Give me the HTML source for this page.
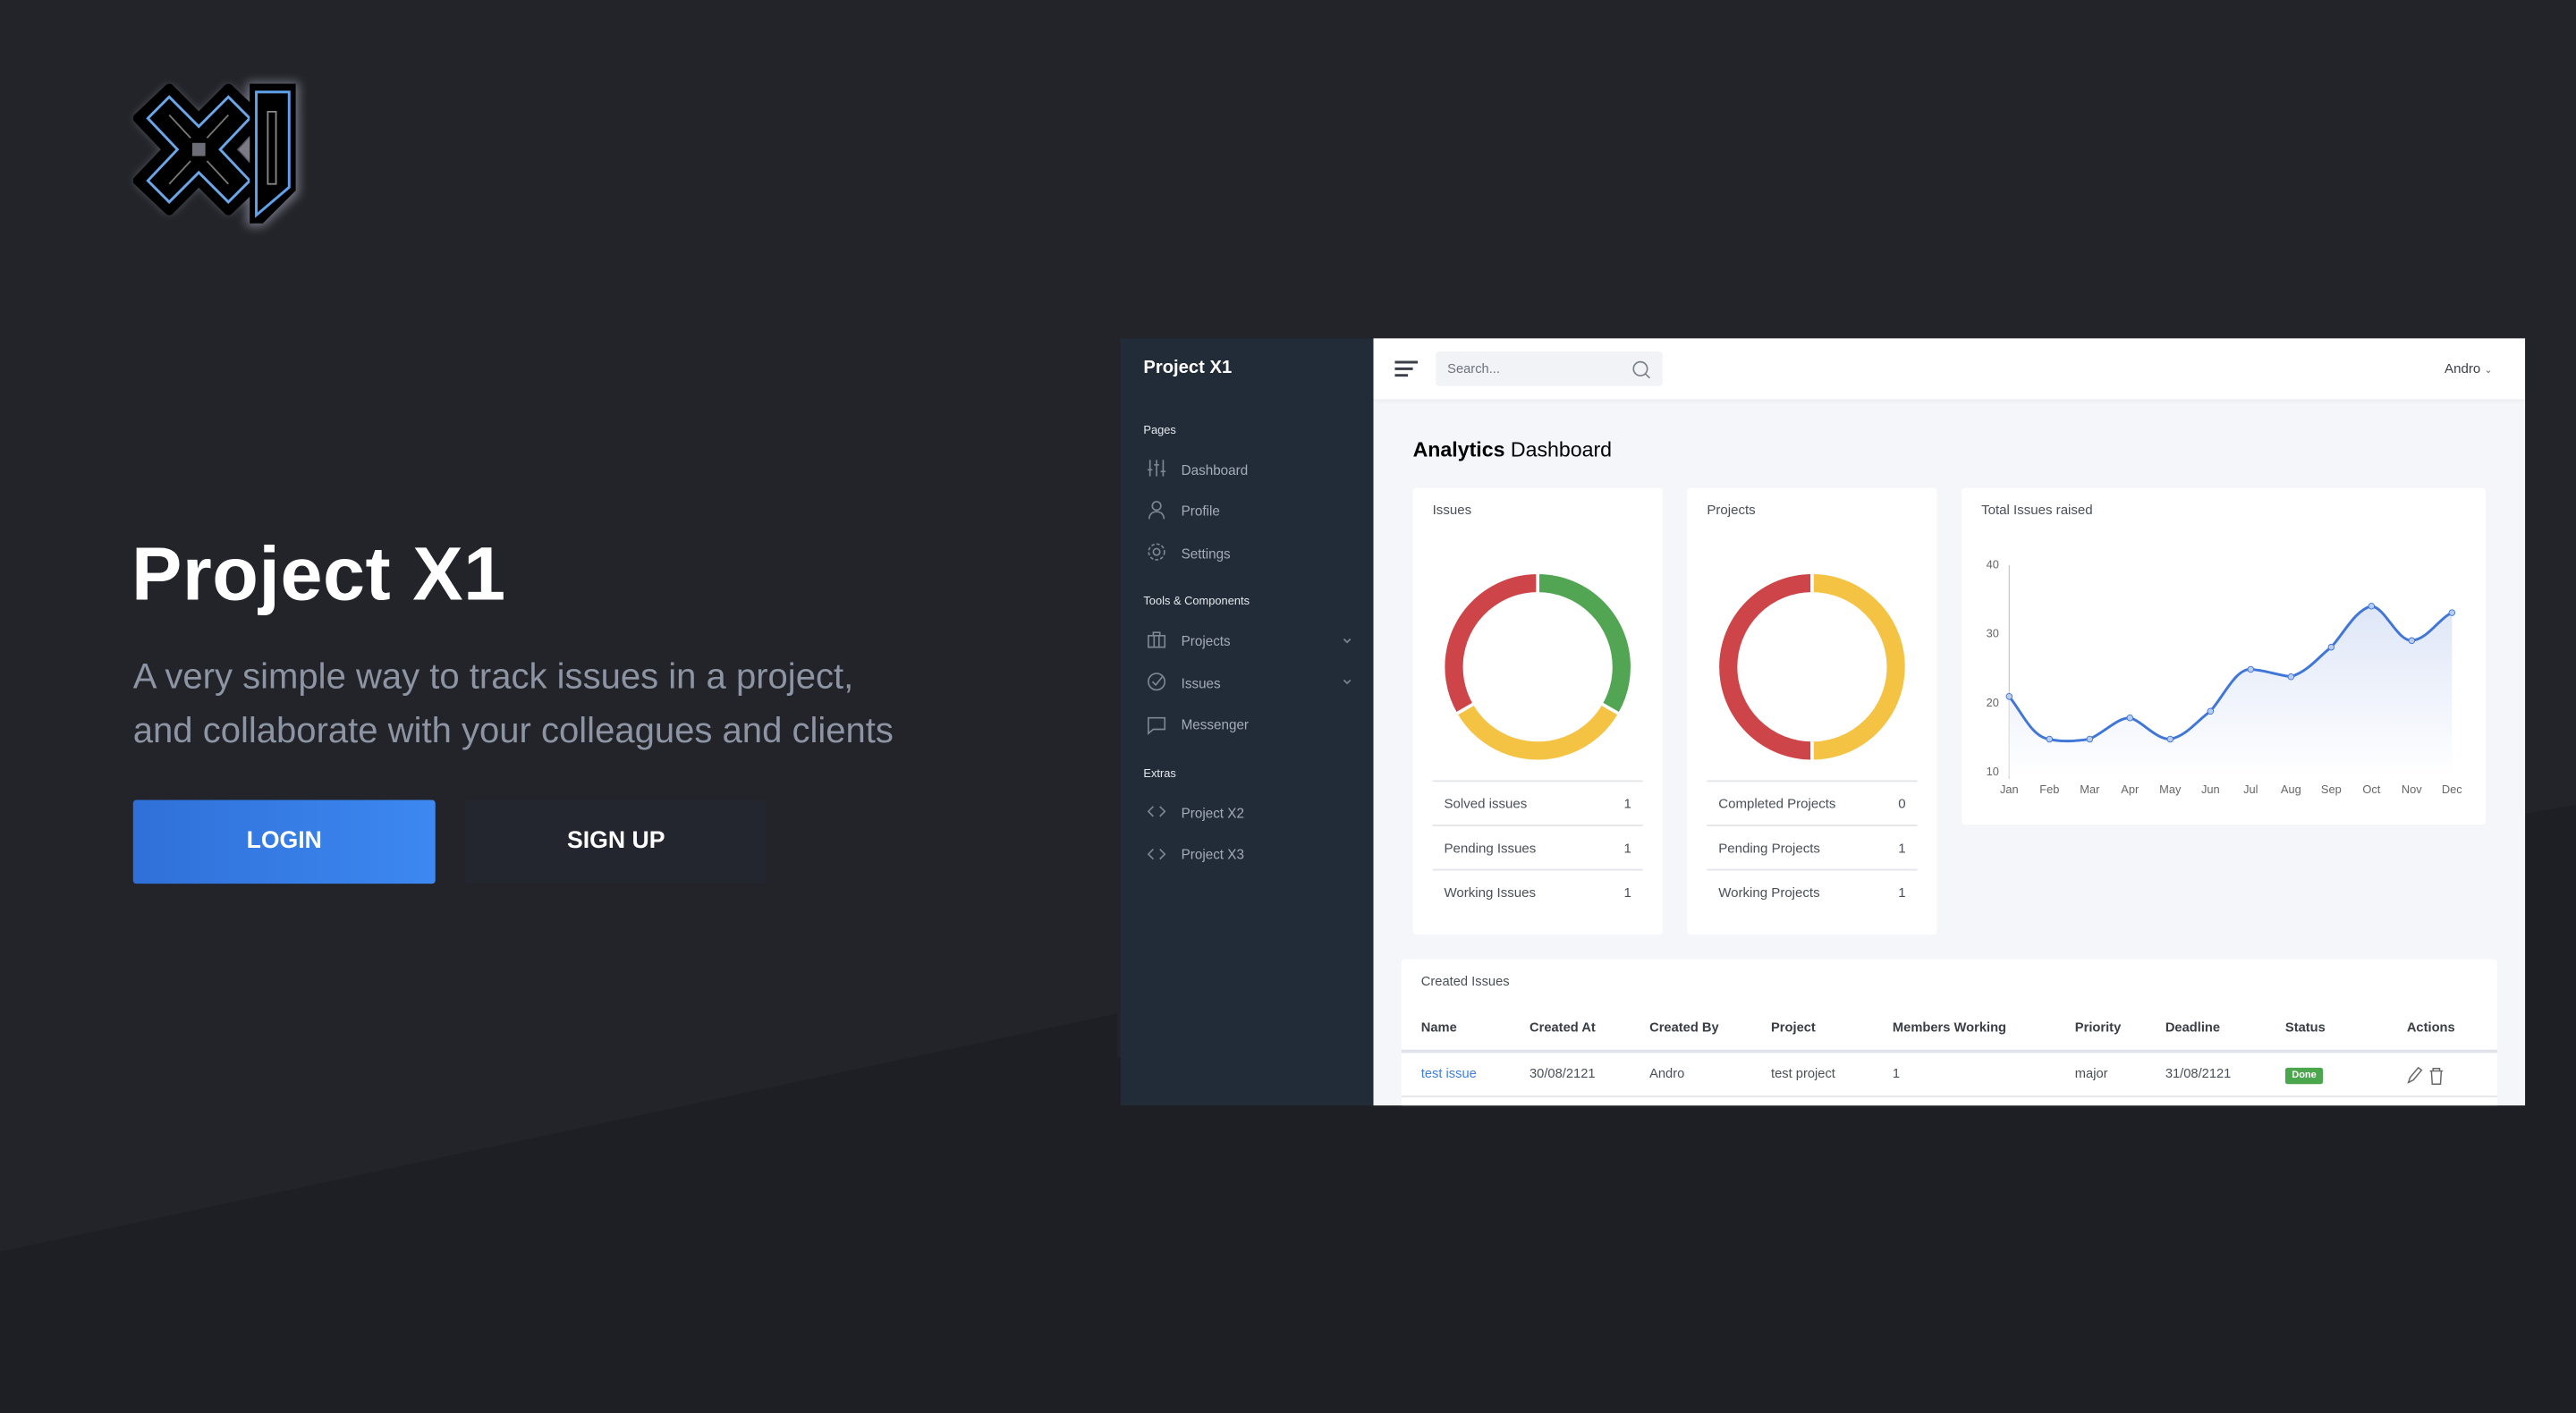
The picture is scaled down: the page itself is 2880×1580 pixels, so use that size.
<!DOCTYPE html>
<html><head><meta charset="utf-8">
<style>
html,body{margin:0;padding:0;background:#1e1f24;width:2880px;height:1580px;overflow:hidden}
#s{position:absolute;left:0;top:0;width:1568px;height:860px;transform:scale(1.836735);transform-origin:0 0;font-family:"Liberation Sans",Arial,sans-serif;overflow:hidden}
.a{position:absolute;white-space:nowrap}
.sb{color:#a4acb8;font-size:8.3px}
.sh{color:#e6e9ee;font-size:7px}
.card{position:absolute;background:#fff;border-radius:2px}
.ct{color:#495057;font-size:8.2px}
.row{position:absolute;left:12px;right:12px;height:27px;border-top:1px solid #e3e5ea;font-size:8.2px;color:#495057}
.row span{position:absolute;top:9px}
.th{font-size:8px;font-weight:bold;color:#3a3f45;top:621px}
.td{font-size:8px;color:#495057;top:649px}
</style></head><body>
<div id="s">
<svg class="a" style="left:0;top:0" width="1568" height="860">
<polygon points="0,0 1568,0 1568,490 0,762" fill="#222429"/>
<polygon points="0,762 680,617 680,860 0,860" fill="#1e1f24"/>
</svg>
<!-- logo -->
<svg class="a" style="left:66px;top:36px" width="130" height="112" viewBox="-10 -10 130 112">
<defs><filter id="g" x="-40%" y="-40%" width="180%" height="180%"><feGaussianBlur stdDeviation="3"/></filter></defs>
<g filter="url(#g)" fill="#8e8fa0" opacity="0.75">
<polygon points="6,26 27,6 45,24 63,6 84,26 66,45 84,64 63,84 45,66 27,84 6,64 24,45"/>
<polygon points="74,4 106,4 106,72 84,92 74,92"/>
</g>
<polygon points="8,26 27,8 45,26 63,8 82,26 64,45 82,64 63,82 45,64 27,82 8,64 26,45" fill="#000" stroke="#000" stroke-width="6" stroke-linejoin="round"/>
<polygon points="14,26 27,13 45,31 63,13 76,26 58,45 76,64 63,77 45,59 27,77 14,64 32,45" fill="none" stroke="#6aa6e8" stroke-width="1.6"/>
<line x1="27" y1="24" x2="40" y2="38" stroke="#777" stroke-width="1"/><line x1="63" y1="24" x2="50" y2="38" stroke="#777" stroke-width="1"/>
<line x1="27" y1="66" x2="40" y2="52" stroke="#777" stroke-width="1"/><line x1="63" y1="66" x2="50" y2="52" stroke="#777" stroke-width="1"/>
<rect x="41" y="41" width="8" height="8" fill="#6d6d78"/>
<polygon points="76,5 104,5 104,70 84,90 76,90" fill="#000"/>
<polygon points="80,10 100,10 100,68 80,85" fill="none" stroke="#5da2ea" stroke-width="1.6"/>
<rect x="87" y="22" width="5" height="44" fill="none" stroke="#888" stroke-width="1"/>
<polygon points="76,38 69,45 76,52" fill="#7b7b86"/>
</svg>
<div class="a" style="left:80px;top:322px;font-size:46px;color:#fff;font-weight:bold;letter-spacing:0.3px">Project X1</div>
<div class="a" style="left:81px;top:396px;font-size:21.8px;color:#8d94a3;line-height:32.5px">A very simple way to track issues in a project,<br>and collaborate with your colleagues and clients</div>
<div class="a" style="left:81px;top:487px;width:184px;height:51px;border-radius:2px;background:linear-gradient(90deg,#2f70d8,#3d88f1);color:#fff;font-weight:bold;font-size:14.5px;text-align:center;line-height:51px">LOGIN</div>
<div class="a" style="left:283px;top:487px;width:184px;height:51px;border-radius:2px;background:#23262f;color:#fff;font-weight:bold;font-size:14.5px;text-align:center;line-height:51px">SIGN UP</div>

<!-- dashboard -->
<div class="a" style="left:682px;top:206px;width:154px;height:467px;background:#222b38"></div>
<div class="a" style="left:836px;top:206px;width:701px;height:467px;background:#f5f6fa;overflow:hidden">
 <div class="a" style="left:0;top:0;width:701px;height:37px;background:#fff;box-shadow:0 1px 3px rgba(0,0,0,.05)"></div>
</div>
<div class="a" style="left:696px;top:218px;font-size:11px;font-weight:bold;color:#fff">Project X1</div>
<div class="a sh" style="left:696px;top:259px">Pages</div>
<div class="a sh" style="left:696px;top:363px">Tools &amp; Components</div>
<div class="a sh" style="left:696px;top:468px">Extras</div>
<div class="a sb" style="left:719px;top:281px">Dashboard</div>
<div class="a sb" style="left:719px;top:306px">Profile</div>
<div class="a sb" style="left:719px;top:332px">Settings</div>
<div class="a sb" style="left:719px;top:385px">Projects</div>
<div class="a sb" style="left:719px;top:411px">Issues</div>
<div class="a sb" style="left:719px;top:436px">Messenger</div>
<div class="a sb" style="left:719px;top:490px">Project X2</div>
<div class="a sb" style="left:719px;top:515px">Project X3</div>
<svg class="a" style="left:696px;top:276px" width="140" height="250" fill="none" stroke="#7d8694" stroke-width="0.9">
 <path d="M4,4v10M8,4v10M12,4v10M2.5,10h3M6.5,7h3M10.5,11h3"/>
 <circle cx="8" cy="32" r="2.6"/><path d="M3.5,40c0-3 2-4.5 4.5-4.5s4.5,1.5 4.5,4.5"/>
 <circle cx="8" cy="60" r="2"/><circle cx="8" cy="60" r="4.8" stroke-dasharray="2 1.2"/>
 <rect x="3" y="111" width="10" height="7"/><path d="M6,111v-2h4v2M6.5,111v7M9.5,111v7"/>
 <circle cx="8" cy="139" r="5"/><path d="M5.5,139l2,2 4-5"/>
 <path d="M3,161h10v7h-7l-3,2.5z"/>
 <path d="M6,215l-3,3 3,3M10,215l3,3-3,3"/>
 <path d="M6,241l-3,3 3,3M10,241l3,3-3,3"/>
 <path d="M122,113l2,2 2-2M122,138l2,2 2-2"/>
</svg>
<svg class="a" style="left:849px;top:219px" width="15" height="12"><path d="M0,1.5h14M0,5.5h11M0,9.5h8" stroke="#3a3f47" stroke-width="1.6"/></svg>
<div class="a" style="left:874px;top:214px;width:138px;height:21px;background:#f2f3f7;border-radius:2px"></div>
<div class="a" style="left:881px;top:220px;font-size:8px;color:#6c737d">Search...</div>
<svg class="a" style="left:993px;top:219px" width="12" height="12" fill="none" stroke="#7a808a" stroke-width="0.9"><circle cx="5.5" cy="5.5" r="4.2"/><path d="M8.6,8.6l2.6,2.6"/></svg>
<div class="a" style="left:1488px;top:220px;font-size:8.2px;color:#3a3f45">Andro <span style="font-size:6px;color:#666">&#8964;</span></div>
<div class="a" style="left:860px;top:267px;font-size:12.6px;color:#000"><b>Analytics</b> Dashboard</div>

<!-- cards -->
<div class="card" style="left:860px;top:297px;width:152px;height:272px">
 <div class="a ct" style="left:12px;top:9px">Issues</div>
 <div class="row" style="top:178px"><span style="left:7px">Solved issues</span><span style="right:7px">1</span></div>
 <div class="row" style="top:205px"><span style="left:7px">Pending Issues</span><span style="right:7px">1</span></div>
 <div class="row" style="top:232px"><span style="left:7px">Working Issues</span><span style="right:7px">1</span></div>
</div>
<div class="card" style="left:1027px;top:297px;width:152px;height:272px">
 <div class="a ct" style="left:12px;top:9px">Projects</div>
 <div class="row" style="top:178px"><span style="left:7px">Completed Projects</span><span style="right:7px">0</span></div>
 <div class="row" style="top:205px"><span style="left:7px">Pending Projects</span><span style="right:7px">1</span></div>
 <div class="row" style="top:232px"><span style="left:7px">Working Projects</span><span style="right:7px">1</span></div>
</div>
<svg class="a" style="left:860px;top:297px" width="320" height="180" fill="none" stroke-width="11">
 <g transform="translate(76,109)">
  <circle r="51" stroke="#52a552" stroke-dasharray="106.8 320.4" transform="rotate(-90)"/>
  <circle r="51" stroke="#f5c343" stroke-dasharray="106.8 320.4" transform="rotate(30)"/>
  <circle r="51" stroke="#cd4549" stroke-dasharray="106.8 320.4" transform="rotate(150)"/>
  <path d="M0,-58v14" stroke="#fff" stroke-width="2"/>
  <path d="M0,-58v14" stroke="#fff" stroke-width="2" transform="rotate(120)"/>
  <path d="M0,-58v14" stroke="#fff" stroke-width="2" transform="rotate(240)"/>
 </g>
 <g transform="translate(243,109)">
  <circle r="51" stroke="#f5c343" stroke-dasharray="160.2 320.4" transform="rotate(-90)"/>
  <circle r="51" stroke="#cd4549" stroke-dasharray="160.2 320.4" transform="rotate(90)"/>
  <path d="M0,-58v14M0,58v-14" stroke="#fff" stroke-width="2"/>
 </g>
</svg>
<div class="card" style="left:1194px;top:297px;width:319px;height:205px">
 <div class="a ct" style="left:12px;top:9px">Total Issues raised</div>
</div>
<svg class="a" style="left:1194px;top:297px" width="319" height="205" font-family="Liberation Sans,sans-serif" font-size="7" fill="#666">
 <defs><linearGradient id="fg" x1="0" y1="0" x2="0" y2="1"><stop offset="0" stop-color="#d6e0f5"/><stop offset="1" stop-color="#fff"/></linearGradient></defs>
 <line x1="29" y1="47" x2="29" y2="177" stroke="#ccc" stroke-width="0.7"/>
 <text x="15" y="49">40</text><text x="15" y="91">30</text><text x="15" y="133">20</text><text x="15" y="175">10</text>
 <path d="M29,127 C37,137 43,152 53.5,153 C62,155 70,154 78,153 C88,148 95,140 102.5,140 C110,142 118,153 127,153 C137,151 143,142 151.5,136 C160,126 167,110 176,110.5 C185,111 192,114 200.5,115 C212,111 217,103 225,97 C233,88 240,74 249.5,72 C258,73 265,93 274,93 C284,92 290,80 298.5,76 L298.5,176 L29,176 Z" fill="url(#fg)" opacity="0.8"/>
 <path d="M29,127 C37,137 43,152 53.5,153 C62,155 70,154 78,153 C88,148 95,140 102.5,140 C110,142 118,153 127,153 C137,151 143,142 151.5,136 C160,126 167,110 176,110.5 C185,111 192,114 200.5,115 C212,111 217,103 225,97 C233,88 240,74 249.5,72 C258,73 265,93 274,93 C284,92 290,80 298.5,76" fill="none" stroke="#3f76d8" stroke-width="1.6"/>
 <g fill="#b9cdf2" stroke="#3f76d8" stroke-width="0.5">
 <circle cx="29" cy="127" r="1.8"/><circle cx="53.5" cy="153" r="1.8"/><circle cx="78" cy="153" r="1.8"/><circle cx="102.5" cy="140" r="1.8"/><circle cx="127" cy="153" r="1.8"/><circle cx="151.5" cy="136" r="1.8"/><circle cx="176" cy="110.5" r="1.8"/><circle cx="200.5" cy="115" r="1.8"/><circle cx="225" cy="97" r="1.8"/><circle cx="249.5" cy="72" r="1.8"/><circle cx="274" cy="93" r="1.8"/><circle cx="298.5" cy="76" r="1.8"/></g>
 <g text-anchor="middle"><text x="29" y="186">Jan</text><text x="53.5" y="186">Feb</text><text x="78" y="186">Mar</text><text x="102.5" y="186">Apr</text><text x="127" y="186">May</text><text x="151.5" y="186">Jun</text><text x="176" y="186">Jul</text><text x="200.5" y="186">Aug</text><text x="225" y="186">Sep</text><text x="249.5" y="186">Oct</text><text x="274" y="186">Nov</text><text x="298.5" y="186">Dec</text></g>
</svg>

<!-- table -->
<div class="card" style="left:853px;top:584px;width:667px;height:89px;border-radius:2px 2px 0 0"></div>
<div class="a ct" style="left:865px;top:593px;font-size:8px">Created Issues</div>
<div class="a" style="left:853px;top:639px;width:667px;height:2px;background:#dfe2e8"></div>
<div class="a" style="left:853px;top:667px;width:667px;height:1px;background:#e3e5ea"></div>
<div class="a th" style="left:865px">Name</div><div class="a th" style="left:931px">Created At</div><div class="a th" style="left:1004px">Created By</div><div class="a th" style="left:1078px">Project</div><div class="a th" style="left:1152px">Members Working</div><div class="a th" style="left:1263px">Priority</div><div class="a th" style="left:1318px">Deadline</div><div class="a th" style="left:1391px">Status</div><div class="a th" style="left:1465px">Actions</div>
<div class="a td" style="left:865px;color:#3f7ee0">test issue</div><div class="a td" style="left:931px">30/08/2121</div><div class="a td" style="left:1004px">Andro</div><div class="a td" style="left:1078px">test project</div><div class="a td" style="left:1152px">1</div><div class="a td" style="left:1263px">major</div><div class="a td" style="left:1318px">31/08/2121</div>
<div class="a" style="left:1391px;top:650px;width:23px;height:10px;background:#4ca64e;border-radius:1.5px;color:#fff;font-size:6px;font-weight:bold;text-align:center;line-height:10px">Done</div>
<svg class="a" style="left:1465px;top:649px" width="26" height="12" fill="none" stroke="#666" stroke-width="0.8"><path d="M1,10l1-3 5-6 2,1.5-5,6z"/><path d="M14,3h8M16,3v-1.5h4v1.5M15,3l.5,8h5l.5-8"/></svg>
</div>
</body></html>
